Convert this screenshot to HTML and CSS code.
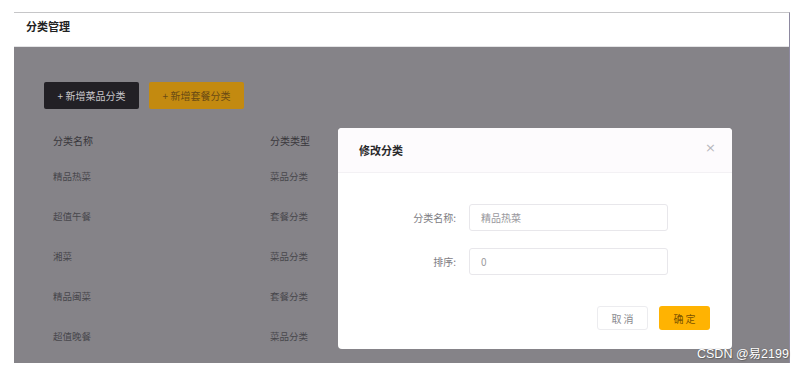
FILE: index.html
```html
<!DOCTYPE html>
<html lang="zh">
<head>
<meta charset="utf-8">
<title>分类管理</title>
<link rel="stylesheet" href="styles.css">
</head>
<body>
<div class="frame">
  <div class="header"><span class="title">分类管理</span></div>
  <div class="content">
    <div class="actions">
      <div class="btn btn-dark">+ 新增菜品分类</div>
      <div class="btn btn-orange">+ 新增套餐分类</div>
    </div>
    <div class="table">
      <div class="row head"><span class="c1">分类名称</span><span class="c2">分类类型</span></div>
      <div class="row"><span class="c1">精品热菜</span><span class="c2">菜品分类</span></div>
      <div class="row"><span class="c1">超值午餐</span><span class="c2">套餐分类</span></div>
      <div class="row"><span class="c1">湘菜</span><span class="c2">菜品分类</span></div>
      <div class="row"><span class="c1">精品闽菜</span><span class="c2">套餐分类</span></div>
      <div class="row"><span class="c1">超值晚餐</span><span class="c2">菜品分类</span></div>
    </div>
  </div>
  <div class="dialog">
    <div class="dlg-head">
      <span class="dlg-title">修改分类</span>
      <span class="close">×</span>
    </div>
    <div class="dlg-body">
      <div class="form-row">
        <label class="label">分类名称:</label>
        <div class="input">精品热菜</div>
      </div>
      <div class="form-row">
        <label class="label">排序:</label>
        <div class="input">0</div>
      </div>
    </div>
    <div class="dlg-foot">
      <div class="fbtn cancel">取 消</div>
      <div class="fbtn ok">确 定</div>
    </div>
  </div>
</div>
<div class="watermark">CSDN @易2199</div>
</body>
</html>
```
FILE: styles.css
```css
* { box-sizing: border-box; }
html, body { margin: 0; padding: 0; background: #fff; }
body {
  width: 805px; height: 368px; overflow: hidden; position: relative;
  font-family: "Noto Sans CJK SC", "Noto Sans", sans-serif;
}
.frame {
  position: relative;
  margin: 12px 0 0 14px;
  width: 776px;
  height: 351px;
  border-top: 1px solid #c6c6c8;
  border-right: 1px solid #8d89a0;
}
.header {
  height: 34px;
  background: #fff;
  display: flex;
  align-items: flex-start;
  padding: 5px 0 0 12px;
  border-bottom: 1px solid #e4e4e6;
}
.title { font-size: 11px; font-weight: 700; color: #222; }
.content {
  height: 316px;
  background: #858388;
  padding: 35px 0 0 30px;
}
.actions { display: flex; gap: 10px; }
.btn {
  width: 95px; height: 27px; border-radius: 2px;
  display: flex; align-items: center; justify-content: center;
  font-size: 10px;
}
.btn-dark { background: #222025; color: #c9c7cc; }
.btn-orange { background: #c38a10; color: #6a4a14; }
.table { margin-top: 15px; width: 300px; }
.row { display: flex; align-items: center; height: 40px; padding-left: 9px; font-size: 9.5px; color: #48474c; }
.row.head { height: 32px; font-size: 10px; color: #38363b; }
.c1 { width: 217px; }
.dialog {
  position: absolute;
  left: 324px; top: 115px;
  width: 394px; height: 221px;
  background: #fff;
  border-radius: 4px;
  display: flex; flex-direction: column;
}
.dlg-head {
  height: 45px;
  display: flex; align-items: center; justify-content: space-between;
  padding: 0 16px 0 21px;
  background: #fdfbfd;
  border-bottom: 1px solid #f3f1f4;
  border-radius: 4px 4px 0 0;
}
.dlg-title { font-size: 11px; font-weight: 700; color: #2a2a2c; }
.close { font-size: 13px; color: #b8b8bc; margin-top: -6px; font-family: "DejaVu Sans", sans-serif; }
.dlg-body { padding: 31px 0 0 0; display: flex; flex-direction: column; gap: 17px; }
.form-row { display: flex; align-items: center; }
.label { width: 118px; text-align: right; font-size: 10px; color: #7d7c82; }
.input {
  margin-left: 13px;
  width: 199px; height: 27px;
  border: 1px solid #e8e7eb; border-radius: 3px;
  display: flex; align-items: center;
  padding-left: 11px;
  font-size: 10px; color: #9a999e;
}
.dlg-foot { display: flex; justify-content: flex-end; gap: 11px; padding: 31px 22px 0 0; }
.fbtn {
  width: 51px; height: 24px; border-radius: 3px;
  display: flex; align-items: center; justify-content: center;
  font-size: 10px;
}
.cancel { border: 1px solid #ececef; color: #8a898e; }
.ok { background: #ffb302; color: #7a5200; }
.watermark {
  position: absolute;
  left: 697px; top: 343px;
  font-family: "Liberation Sans", "Noto Sans CJK SC", sans-serif;
  font-size: 12.5px;
  color: #fff;
  text-shadow: 0 0 1px #555, 1px 1px 1px #666;
}
```
